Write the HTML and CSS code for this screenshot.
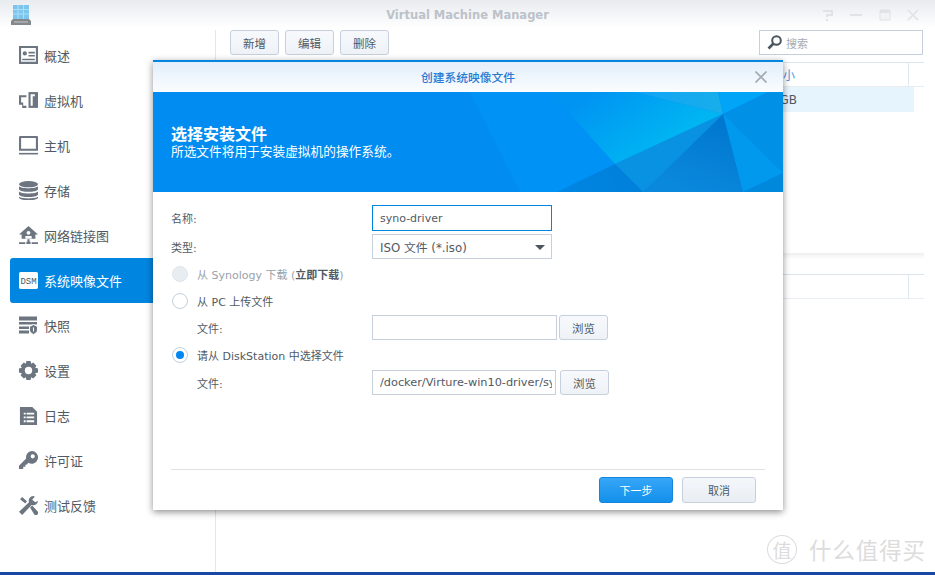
FILE: index.html
```html
<!DOCTYPE html>
<html lang="zh">
<head>
<meta charset="utf-8">
<title>Virtual Machine Manager</title>
<link rel="stylesheet" href="styles.css">
</head>
<body>
<div class="window">
  <header class="titlebar">
    <svg class="app-logo" width="20" height="20" viewBox="0 0 20 20"><rect x="2" y="0" width="16" height="14" fill="#7cc6ee"/><path d="M2 4.500h16M2 9h16M7 0v14M12.500 0v14" stroke="#a9def7" stroke-width="1"/><path d="M2 14h16l2 2v4H0v-4z" fill="#83888d"/><path d="M3 17h14" stroke="#c5c8cb"/></svg>
    <div class="app-title">Virtual Machine Manager</div>
    <div class="win-controls">
      <svg width="12" height="12" viewBox="0 0 12 12"><path d="M1 2h9v4H5v2M5 10v2" fill="none" stroke="#dfe2e6" stroke-width="2"/></svg>
      <svg width="12" height="12" viewBox="0 0 12 12"><path d="M0 6h12" stroke="#dfe2e6" stroke-width="2"/></svg>
      <svg width="12" height="12" viewBox="0 0 12 12"><path d="M1 1h10v10H1z" fill="#f2f3f5" stroke="#dfe2e6"/><path d="M1 2.500h10" stroke="#dfe2e6" stroke-width="3"/></svg>
      <svg width="12" height="12" viewBox="0 0 12 12"><path d="M1 1l10 10M11 1L1 11" stroke="#dfe2e6" stroke-width="1.600"/></svg>
    </div>
  </header>
  <div class="content">
    <nav class="sidebar">
      <a class="nav-item"><svg class="nav-icon" viewBox="0 0 18 18"><path fill-rule="evenodd" d="M0 0h18v17H0zM2 2v13h14V2z" fill="#6d7680"/><circle cx="5.500" cy="7" r="2" fill="#6d7680"/><path d="M3 12h12v1.500H3zM9 5.500h6V7H9zM9 8.500h6V10H9z" fill="#6d7680"/></svg><span>概述</span></a>
      <a class="nav-item"><svg class="nav-icon" viewBox="0 0 18 18"><path d="M9 1h9v15H9z" fill="#6d7680"/><path d="M11 3h4v2h-2v9h-2z" fill="#fff"/><path d="M7 4H0v9h3v3h4v-2H4v-3H2V6h5z" fill="#6d7680"/></svg><span>虚拟机</span></a>
      <a class="nav-item"><svg class="nav-icon" viewBox="0 0 18 18"><path fill-rule="evenodd" d="M1 0h16a1 1 0 0 1 1 1v13H0V1a1 1 0 0 1 1-1zM2 2v10h14V2z" fill="#6d7680"/><path d="M0 16h18v1.500H0z" fill="#6d7680"/></svg><span>主机</span></a>
      <a class="nav-item"><svg class="nav-icon" viewBox="0 0 18 18"><ellipse cx="9" cy="3" rx="9" ry="3" fill="#6d7680"/><path d="M0 5c2 2.500 16 2.500 18 0v3c-2 3-16 3-18 0zM0 10c2 2.500 16 2.500 18 0v3c-2 3-16 3-18 0zM0 15c2 2 16 2 18 0v1c-2 3-16 3-18 0z" fill="#6d7680"/></svg><span>存储</span></a>
      <a class="nav-item"><svg class="nav-icon" viewBox="0 0 18 18"><path d="M9 0l9 8h-2.500v4h-13V8H0z" fill="#6d7680"/><circle cx="9" cy="6.500" r="1.800" fill="#fff"/><path d="M6 12V9.500h6V12z" fill="#fff"/><path d="M8 12.500h2V15h1v2H7v-2h1zM0 15.500h6v1.500H0zM12 15.500h6v1.500h-6z" fill="#6d7680"/></svg><span>网络链接图</span></a>
      <a class="nav-item active"><svg class="nav-icon" viewBox="0 0 18 18"><rect y="1" width="18" height="16" rx="1.500" fill="#fff"/><text class="dsm-mark" x="9" y="12">DSM</text></svg><span>系统映像文件</span></a>
      <a class="nav-item"><svg class="nav-icon" viewBox="0 0 19 18"><path d="M0 0h18v4H0zM0 5.500h18V8H0zM0 10h10v2.500H0zM0 14h10v3H0z" fill="#6d7680"/><path d="M14.500 8l4 2v3.500c0 2-2 3.500-4 4.500-2-1-4-2.500-4-4.500V10z" fill="#6d7680" stroke="#fff"/><path d="M14 11h1v4h-1z" fill="#fff"/></svg><span>快照</span></a>
      <a class="nav-item"><svg class="nav-icon" viewBox="0 0 18 18"><path fill-rule="evenodd" d="M7 0h4l.5 2.500 2-1 3 3-1.200 2L18 7v4l-2.700.5 1.200 2-3 3-2-1.200L11 18H7l-.5-2.700-2 1.200-3-3 1.200-2L0 11V7l2.700-.5-1.200-2 3-3 2 1zM9 5.500a3.500 3.500 0 1 0 0 7 3.500 3.500 0 0 0 0-7z" fill="#6d7680"/></svg><span>设置</span></a>
      <a class="nav-item"><svg class="nav-icon" viewBox="0 0 18 20"><path d="M0 1h13l5 5v14H0z" fill="#6d7680"/><path d="M4 7h2v2H4zM7 7h8v2H7zM4 11h2v2H4zM7 11h8v2H7zM4 15h2v2H4zM7 15h8v2H7z" fill="#fff"/></svg><span>日志</span></a>
      <a class="nav-item"><svg class="nav-icon" viewBox="0 0 18 18"><path fill-rule="evenodd" d="M12 0a6 6 0 1 1-3 11.200L7 13l-1 0v2H4v2H0v-3l6.800-6.800A6 6 0 0 1 12 0zm1 3a2 2 0 1 0 0 4 2 2 0 0 0 0-4z" fill="#6d7680"/></svg><span>许可证</span></a>
      <a class="nav-item"><svg class="nav-icon" viewBox="0 0 18 18"><path d="M13.500 0a4.500 4.500 0 0 0-4 6L0 15l3 3 9-9.500a4.500 4.500 0 0 0 6-4L15.500 6 12.500 3.500 15 .5z" fill="#6d7680"/><path d="M1 3l2-2 4.500 4L6 7zM10.500 11l2-2 5 5.500a2 2 0 0 1-3 3z" fill="#6d7680"/></svg><span>测试反馈</span></a>
    </nav>
    <main class="main">
      <div class="toolbar">
        <button class="btn">新增</button>
        <button class="btn">编辑</button>
        <button class="btn">删除</button>
        <div class="search">
          <svg width="15" height="15" viewBox="0 0 15 15"><circle cx="9.500" cy="5.500" r="4.300" fill="none" stroke="#4a5560" stroke-width="2"/><path d="M6.500 8.500L1.500 13.500" stroke="#4a5560" stroke-width="2.600"/></svg>
          <span>搜索</span>
        </div>
      </div>
      <div class="table-head"><span class="col-wide">大小</span><span class="col-end"></span></div>
      <div class="table-row"><span class="col-text">2 GB</span></div>
      <div class="split"></div>
      <div class="table-head lower"><span class="col-wide"></span><span class="col-end"></span></div>
    </main>
  </div>
  <div class="taskbar"></div>
  <div class="watermark">
    <span class="wm-badge">值</span><span>什么值得买</span>
  </div>
  <section class="dialog">
    <div class="dialog-head">
      <span class="dialog-title">创建系统映像文件</span>
      <svg class="dialog-close" width="12" height="12" viewBox="0 0 12 12"><path d="M.5.500l11 11M11.500.500l-11 11" stroke="#a5acb3" stroke-width="1.700"/></svg>
    </div>
    <div class="banner">
      <svg class="banner-art" width="630" height="100" viewBox="0 0 630 100">
        <defs>
          <linearGradient id="bright" gradientUnits="userSpaceOnUse" x1="440" y1="0" x2="490" y2="72"><stop offset="0" stop-color="#0094f2"/><stop offset="1" stop-color="#00b6f2"/></linearGradient>
          <linearGradient id="ridge" gradientUnits="userSpaceOnUse" x1="482" y1="0" x2="570" y2="22"><stop offset="0" stop-color="#12a4f6"/><stop offset="1" stop-color="#18aeea"/></linearGradient>
          <linearGradient id="deep" gradientUnits="userSpaceOnUse" x1="570" y1="22" x2="540" y2="100"><stop offset="0" stop-color="#0076ce"/><stop offset="1" stop-color="#0a88dc"/></linearGradient>
          <linearGradient id="low" gradientUnits="userSpaceOnUse" x1="404" y1="100" x2="490" y2="72"><stop offset="0" stop-color="#0086e4"/><stop offset="1" stop-color="#007fd8"/></linearGradient>
        </defs>
        <polygon points="317,0 397,0 462,72 404,100 367,100" fill="#0092f4"/>
        <polygon points="397,0 482,0 570,22 462,72" fill="url(#bright)"/>
        <polygon points="482,0 565,0 570,22" fill="url(#ridge)"/>
        <polygon points="565,0 615,0 570,22" fill="#00a5f8"/>
        <polygon points="615,0 630,0 630,81 570,22" fill="#0090e6"/>
        <polygon points="570,22 630,81 590,100" fill="#0099ee"/>
        <polygon points="590,100 630,81 630,100" fill="#0088dc"/>
        <polygon points="570,22 590,100 490,100" fill="url(#deep)"/>
        <polygon points="462,72 570,22 490,100" fill="#0a92e2"/>
        <polygon points="462,72 490,100 404,100" fill="url(#low)"/>
      </svg>
      <h1 class="banner-title">选择安装文件</h1>
      <p class="banner-sub">所选文件将用于安装虚拟机的操作系统。</p>
    </div>
    <div class="dialog-body">
      <div class="row first"><label class="row-label">名称:</label><div class="input focus">syno-driver</div></div>
      <div class="row type"><label class="row-label">类型:</label><div class="input select">ISO 文件 (*.iso)<i class="caret"></i></div></div>
      <div class="radio-row synology"><i class="radio disabled"></i><span class="muted">从 Synology 下载 (<b>立即下载</b>)</span></div>
      <div class="radio-row pc"><i class="radio"></i><span>从 PC 上传文件</span></div>
      <div class="row sub upload"><label class="row-label">文件:</label><div class="input wide"></div><button class="btn small">浏览</button></div>
      <div class="radio-row ds"><i class="radio checked"></i><span>请从 DiskStation 中选择文件</span></div>
      <div class="row sub disk"><label class="row-label">文件:</label><div class="input path"><span class="clip">/docker/Virture-win10-driver/sy</span></div><button class="btn small gap">浏览</button></div>
    </div>
    <div class="dialog-foot">
      <button class="btn action primary">下一步</button>
      <button class="btn action cancel">取消</button>
    </div>
  </section>
</div>
</body>
</html>
```

FILE: styles.css
```css
* { box-sizing: border-box; }
html, body { margin: 0; height: 100%; }
body {
  font-family: "DejaVu Sans", "Noto Sans CJK SC", sans-serif;
  font-size: 11px;
  color: #505a64;
  background: #fff;
  overflow: hidden;
}
.window { position: relative; width: 935px; height: 575px; display: flex; flex-direction: column; }

.titlebar {
  height: 28px;
  flex: none;
  display: flex;
  align-items: center;
  position: relative;
  background: linear-gradient(#e8ebef, #fff);
}
.app-logo { position: absolute; left: 11px; top: 5px; }
.app-title {
  width: 100%;
  padding-top: 1px;
  text-align: center;
  font-weight: bold;
  font-size: 11.5px;
  color: #bcc2c9;
}
.win-controls { position: absolute; right: 16px; top: 9px; display: flex; gap: 16.5px; }

.content { flex: 1; display: flex; min-height: 0; }
.sidebar { width: 216px; flex: none; padding: 3px 0 0 10px; border-right: 1px solid #e3e6ea; margin-top: 2px; }
.nav-item {
  height: 45px;
  padding-left: 9px;
  display: flex;
  align-items: center;
  gap: 6px;
  font-size: 13px;
  color: #505a64;
  border-radius: 3px 0 0 3px;
}
.nav-item.active { background: #0086e0; color: #fff; }
.nav-icon { width: 19px; height: 19px; flex: none; }
.dsm-mark { font: 8.500px "Liberation Mono", monospace; fill: #4a5560; text-anchor: middle; }

.main { flex: 1; min-width: 0; padding: 2px 11px 0 14px; }
.toolbar { display: flex; gap: 6px; height: 25px; }
.btn {
  width: 49px;
  height: 25px;
  padding: 0;
  border: 1px solid #c5d0dc;
  border-radius: 3px;
  background: linear-gradient(#f7f9fc, #eef2f7);
  font: 11.500px "DejaVu Sans", "Noto Sans CJK SC", sans-serif;
  color: #505a64;
}
.search {
  width: 164px;
  height: 25px;
  margin-left: auto;
  margin-right: 1px;
  padding-left: 7px;
  display: flex;
  align-items: center;
  gap: 4px;
  border: 1px solid #c5d0dc;
  font-size: 11px;
  color: #a4acb4;
}
.table-head {
  margin-top: 7px;
  height: 25px;
  display: flex;
  border-top: 1px solid #dbe3ec;
  border-bottom: 1px solid #e8edf3;
}
.col-wide { flex: 1; display: flex; align-items: center; justify-content: flex-end; padding-right: 113px; color: #4a90e0; font-size: 12px; }
.col-end { width: 16px; border-left: 1px solid #e1e8ef; }
.table-row {
  height: 25px;
  margin-right: 10px;
  background: #e6f4fe;
  display: flex;
  align-items: center;
  justify-content: flex-end;
}
.col-text { padding-right: 117px; font-size: 12px; }
.split { margin-top: 141px; height: 21px; border-bottom: 1px solid #fff; background: linear-gradient(#efefef, #fff 30%); }
.table-head.lower { margin-top: 0; }

.taskbar { height: 3px; flex: none; background: #1748a4; }
.watermark {
  position: absolute;
  right: 9px;
  bottom: 10px;
  display: flex;
  align-items: center;
  gap: 12px;
  font-size: 22.400px;
  color: #dcdcdc;
  letter-spacing: 1px;
}
.wm-badge {
  width: 30px;
  height: 29px;
  border: 1px solid #dcdcdc;
  border-radius: 50%;
  display: flex;
  align-items: center;
  justify-content: center;
  font-size: 19px;
  letter-spacing: 0;
}

.dialog {
  position: absolute;
  left: 153px;
  top: 60px;
  width: 630px;
  height: 450px;
  display: flex;
  flex-direction: column;
  background: #fff;
  border-top: 2px solid #0086e0;
  box-shadow: 0 2px 7px rgba(0, 0, 0, .45);
}
.dialog-head {
  height: 30px;
  flex: none;
  position: relative;
  display: flex;
  align-items: center;
  justify-content: center;
  background: linear-gradient(#e2eefa, #fbfdff);
}
.dialog-title { color: #2a7ad2; font-size: 11.750px; font-weight: 500; margin-top: -2px; }
.dialog-close { position: absolute; right: 16px; top: 9px; }
.banner {
  height: 100px;
  flex: none;
  position: relative;
  padding: 34px 0 0 18px;
  background: #008cf0;
  color: #fff;
  overflow: hidden;
}
.banner-art { position: absolute; inset: 0; }
.banner-title { position: relative; margin: 0; font-size: 16px; line-height: 18px; font-weight: bold; }
.banner-sub { position: relative; margin: 0; font-size: 12.700px; line-height: 15px; }

.dialog-body { flex: 1; padding: 13px 0 0 18px; }
.row { display: flex; align-items: center; height: 25px; }
.row-label { width: 201px; flex: none; }
.row.first { height: 26px; }
.row.type { margin-top: 3px; }
.row.sub .row-label { width: 175px; margin-left: 26px; }
.row.upload { margin-top: 5px; }
.row.disk { margin-top: 6px; }
.input {
  width: 180px;
  height: 25px;
  padding: 0 7px;
  display: flex;
  align-items: center;
  border: 1px solid #c5d0dc;
  color: #505a64;
  font-size: 11px;
  white-space: nowrap;
}
.input.focus { height: 26px; border-color: #0086e0; padding-top: 1px; }
.input.select { position: relative; font-size: 11.800px; }
.caret {
  position: absolute;
  right: 6px;
  top: 10px;
  border: 5px solid transparent;
  border-top: 5px solid #4a5560;
  border-bottom: 0;
}
.input.wide { width: 185px; }
.input.path { width: 184px; padding-right: 3px; font-size: 11.300px; }
.clip { display: block; width: 100%; overflow: hidden; }
.btn.small { margin-left: 2px; width: 49px; }
.btn.small.gap { margin-left: 4px; }
.radio-row { height: 18px; padding-left: 1px; display: flex; align-items: center; gap: 9px; color: #505a64; font-size: 11px; }
.radio-row.synology { margin-top: 6px; }
.radio-row.pc { margin-top: 9px; }
.radio-row.ds { margin-top: 6px; }
.muted { color: #98a1aa; }
.muted b { color: #505a64; font-weight: 600; }
.radio {
  width: 16px;
  height: 16px;
  flex: none;
  border-radius: 50%;
  border: 1px solid #c5d0dc;
  background: #fff;
  position: relative;
}
.radio.disabled { background: #e8edf2; border-color: #e0e5ea; }
.radio.checked::after {
  content: "";
  position: absolute;
  left: 3px;
  top: 3px;
  width: 8px;
  height: 8px;
  border-radius: 50%;
  background: #0086f0;
}
.dialog-foot {
  height: 41px;
  flex: none;
  margin: 0 18px;
  padding: 7px 9px 0 0;
  display: flex;
  justify-content: flex-end;
  gap: 9px;
  border-top: 1px solid #dfe1e3;
}
.btn.action { width: 74px; height: 26px; font-size: 11px; }
.btn.primary { background: linear-gradient(#36a6f8, #1390ea); border-color: #1485dc; color: #fff; }
.btn.cancel { background: linear-gradient(#f5f7fa, #e9eef4); }
```
